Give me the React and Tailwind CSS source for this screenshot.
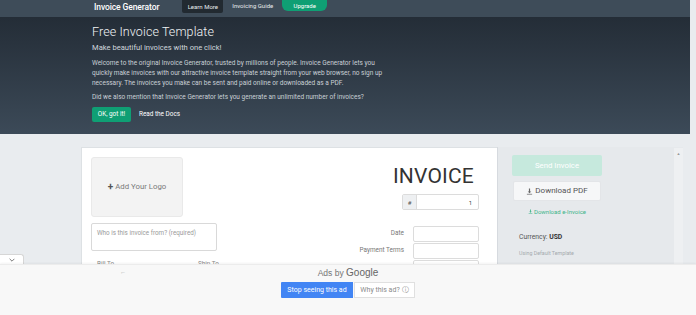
import React from 'react';

function DownloadIcon({ className }) {
  return (
    <svg viewBox="0 0 12 12" className={className} fill="currentColor">
      <path d="M5 1h2v5h2L6 9 3 6h2z" />
      <rect x="1.5" y="10" width="9" height="1.2" />
    </svg>
  );
}

export default function App() {
  const font = { fontFamily: 'Roboto, "Liberation Sans", Arial, sans-serif' };

  return (
    <div className="relative w-[696px] h-[315px] overflow-hidden bg-[#e9ecef]" style={font}>
      <div className="w-[690px]">
        {/* top nav */}
        <div className="h-[17px] bg-[#3e4c59] flex items-start">
          <div className="ml-[94px] mt-[2px] text-[8.5px] font-medium text-white leading-[10px] tracking-[-0.1px]">
            Invoice Generator
          </div>
          <div className="ml-[23px] h-[13px] w-[41px] bg-[#222a31] rounded-b-[2px] flex items-center justify-center text-[6px] text-[#e8ebee]">
            Learn More
          </div>
          <div className="ml-[9px] h-[11px] flex items-center text-[6px] text-[#e8ebee]">Invoicing Guide</div>
          <div className="ml-[9px] h-[11px] w-[45px] bg-[#0f9f74] rounded-b-[6px] flex items-center justify-center text-[6px] text-white">
            Upgrade
          </div>
        </div>

        {/* hero */}
        <div className="h-[117px] bg-gradient-to-b from-[#242d37] to-[#3c4a58] pl-[92px] pt-[8px] text-white">
          <div className="text-[12.5px] leading-[14px] font-light tracking-[0.1px] text-[#f2f4f6]">Free Invoice Template</div>
          <div className="mt-[4px] text-[7.6px] leading-[10px] text-[#cfd6dc]">Make beautiful invoices with one click!</div>
          <div className="mt-[5px] w-[292px] text-[6.5px] leading-[10px] text-[#c9d0d6]">
            Welcome to the original Invoice Generator, trusted by millions of people. Invoice Generator lets you quickly make invoices with our attractive invoice template straight from your web browser, no sign up necessary. The invoices you make can be sent and paid online or downloaded as a PDF.
          </div>
          <div className="mt-[4px] text-[6.5px] leading-[10px] text-[#c9d0d6]">
            Did we also mention that Invoice Generator lets you generate an unlimited number of invoices?
          </div>
          <div className="mt-[5px] flex items-center">
            <div className="h-[15px] w-[39px] bg-[#0f9f74] rounded-[2px] flex items-center justify-center text-[6.4px] text-white">
              OK, got it!
            </div>
            <div className="ml-[8px] text-[6.4px] text-white">Read the Docs</div>
          </div>
        </div>
      </div>

      {/* main */}
      <div className="flex pt-[13px] pl-[81px]">
        <div className="w-[416px] h-[140px] bg-white border-l border-t border-[#dde1e4] pl-[9px] pr-[18px] pt-[9px] flex justify-between">
          <div className="flex flex-col">
            <div className="w-[92px] h-[60px] bg-[#f3f3f3] border border-[#e9e9e9] rounded-[3px] flex items-center justify-center text-[7.8px] text-[#7a7a7a]">
              <span className="text-[10px] font-bold text-[#555] mr-[2px] leading-none">+</span>Add Your Logo
            </div>
            <div className="mt-[6px] w-[126px] h-[28px] border border-[#d9d9d9] rounded-[2px] px-[5px] pt-[5px] text-[6.3px] text-[#9a9a9a]">
              Who is this invoice from? (required)
            </div>
            <div className="mt-[9px] flex text-[6.3px] text-[#888]">
              <span className="ml-[6px]">Bill To</span>
              <span className="ml-[84px]">Ship To</span>
            </div>
          </div>
          <div className="flex flex-col items-end">
            <div className="mt-[7px] mr-[5px] text-[21px] leading-[24px] text-[#333] tracking-[0.2px]">INVOICE</div>
            <div className="mt-[6px] flex h-[16px] w-[77px] border border-[#dcdcdc] rounded-[2px] text-[6px] text-[#555]">
              <div className="w-[14px] bg-[#eef0f2] border-r border-[#dcdcdc] flex items-center justify-center">#</div>
              <div className="flex-1 flex items-center justify-end pr-[6px] text-[#444]">1</div>
            </div>
            <div className="mt-[16px] flex items-center">
              <span className="text-[6.4px] text-[#777] mr-[9px]">Date</span>
              <div className="w-[66px] h-[16px] border border-[#dcdcdc] rounded-[2px]"></div>
            </div>
            <div className="mt-[1px] flex items-center">
              <span className="text-[6.4px] text-[#777] mr-[9px]">Payment Terms</span>
              <div className="w-[66px] h-[16px] border border-[#dcdcdc] rounded-[2px]"></div>
            </div>
            <div className="mt-[1px] w-[66px] h-[16px] border border-[#dcdcdc] rounded-[2px]"></div>
          </div>
        </div>

        <div className="w-[186px] h-[140px] bg-[#e6e9ec] border-l border-[#d6dadf] pl-[14px] pt-[8px] relative">
          <div className="w-[90px] h-[21px] bg-[#c6e9dd] rounded-[2px] flex items-center justify-center text-[7.8px] text-white">
            Send Invoice
          </div>
          <div className="mt-[5px] ml-[1px] w-[88px] h-[20px] bg-[#f6f7f8] border border-[#e3e5e8] rounded-[2px] flex items-center justify-center text-[8px] text-[#555]">
            <DownloadIcon className="w-[7px] h-[7px] mr-[2px] text-[#666]" />
            Download PDF
          </div>
          <div className="mt-[6px] w-[90px] flex items-center justify-center text-[6px] text-[#3db489]">
            <DownloadIcon className="w-[5px] h-[5px] mr-[1px]" />
            Download e-Invoice
          </div>
          <div className="mt-[16px] ml-[7px] text-[6.8px] text-[#555]">
            Currency: <span className="font-bold text-[#333]">USD</span>
          </div>
          <div className="mt-[8px] ml-[7px] text-[5.3px] text-[#a5a9ae]">Using Default Template</div>
          <div className="absolute right-[0px] top-[1px] w-[9px] h-[140px] bg-[#eef0f2] flex justify-center pt-[4px]">
            <span className="text-[4px] text-[#999] leading-none">▲</span>
          </div>
        </div>
      </div>

      {/* collapse tab */}
      <div className="absolute left-0 top-[254px] w-[24px] h-[11px] bg-white border-t border-r border-[#d6d6d6] rounded-tr-[3px] flex items-center justify-center">
        <svg viewBox="0 0 10 6" className="w-[6px] h-[4px]" fill="none" stroke="#555" strokeWidth="1.3">
          <path d="M1 1l4 4 4-4" />
        </svg>
      </div>

      {/* ad overlay */}
      <div className="absolute left-0 right-0 bottom-0 h-[51px] bg-[#f8f8f8] border-t border-[#ececec] shadow-[0_-1px_2px_rgba(0,0,0,0.05)] flex flex-col items-center">
        <div className="absolute left-[120px] top-[2px] text-[6px] text-[#aaa]">←</div>
        <div className="mt-[2px] text-[8.5px] text-[#757575] leading-[12px]" style={{ fontFamily: '"Liberation Sans", Arial, sans-serif' }}>
          Ads by <span className="text-[10px] text-[#666]">Google</span>
        </div>
        <div className="mt-[3px] flex">
          <div className="h-[16px] w-[72px] bg-[#4285f4] rounded-l-[1px] flex items-center justify-center text-[7px] text-white">
            Stop seeing this ad
          </div>
          <div className="ml-[1px] h-[16px] w-[61px] bg-white border border-[#e0e0e0] flex items-center justify-center text-[7px] text-[#8a8a8a]">
            Why this ad? <span className="ml-[2px] text-[7px]">ⓘ</span>
          </div>
        </div>
      </div>
    </div>
  );
}
